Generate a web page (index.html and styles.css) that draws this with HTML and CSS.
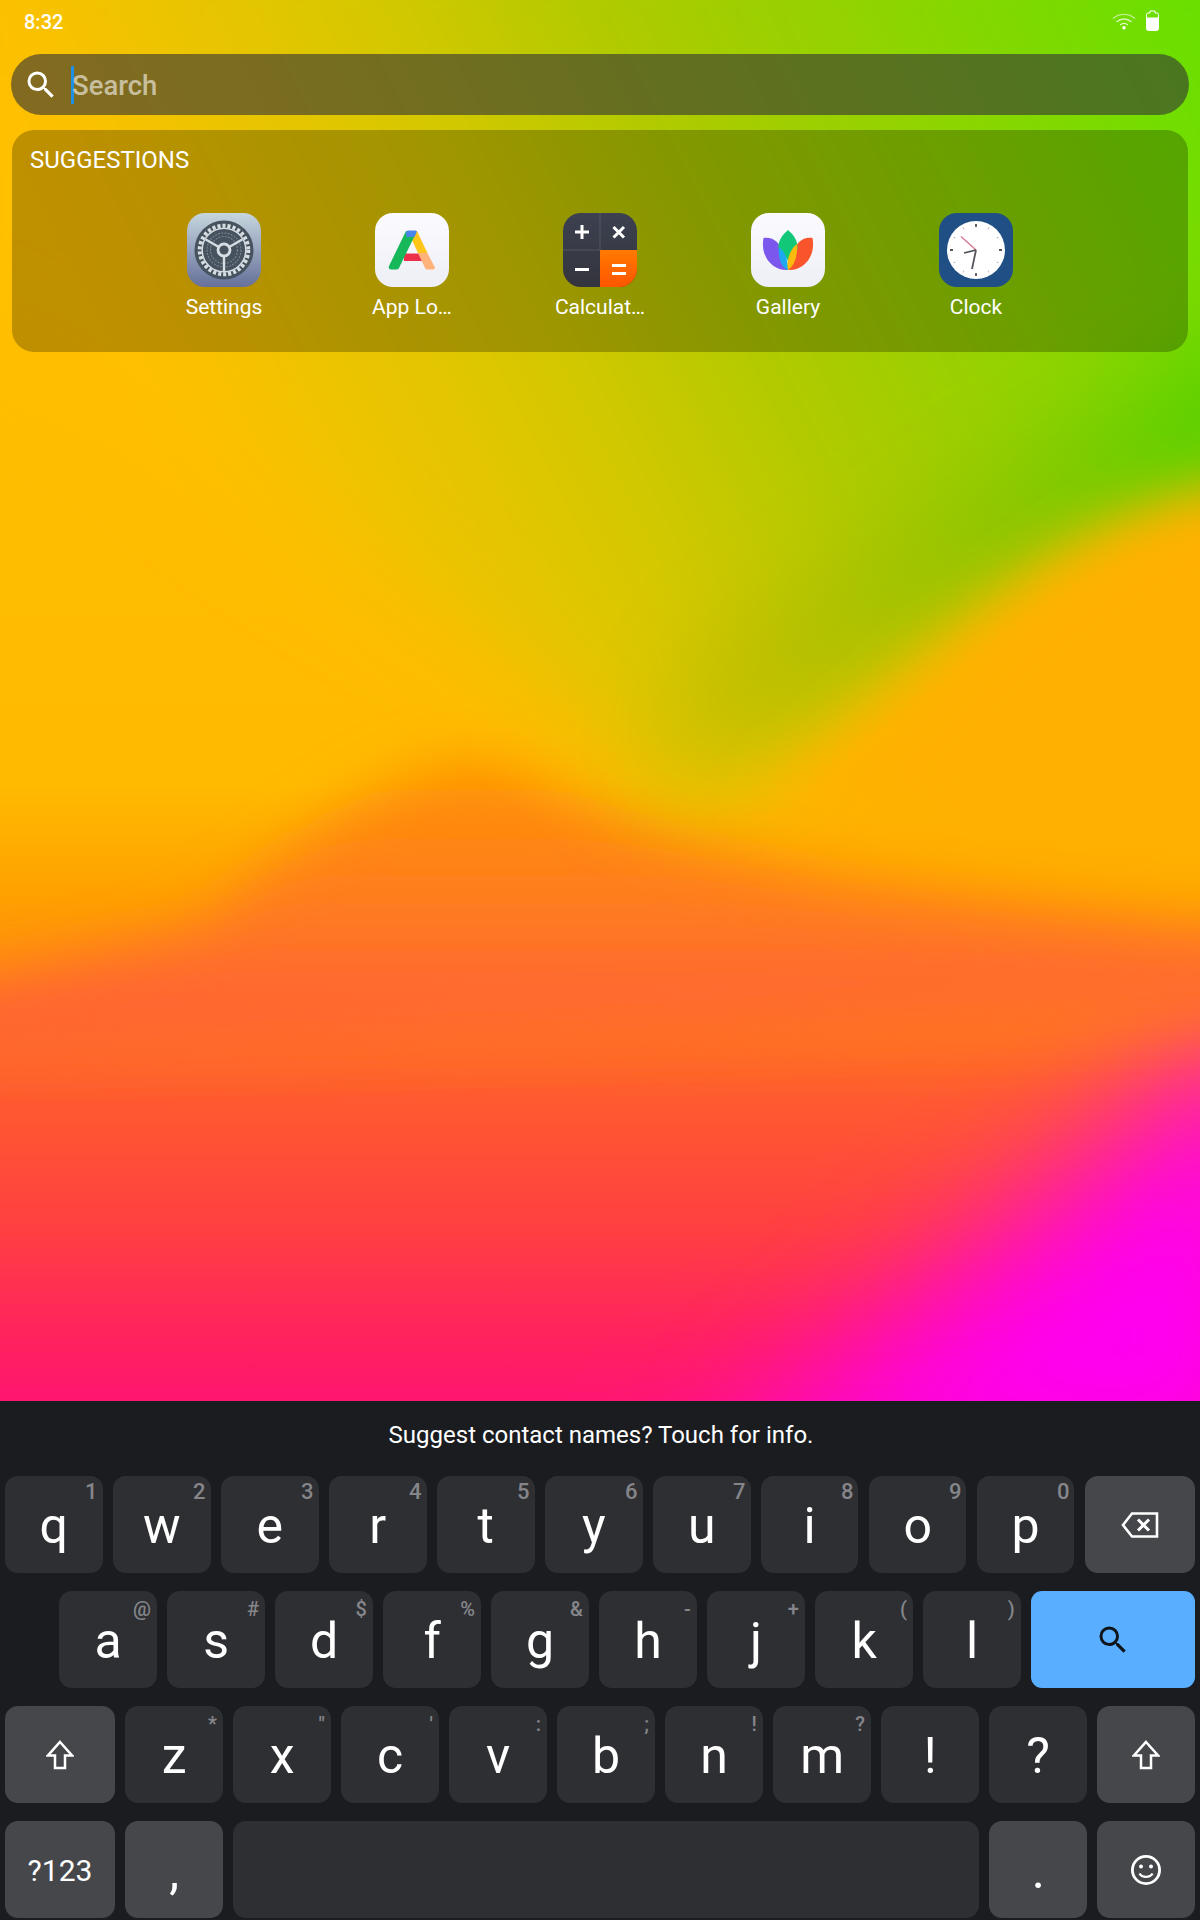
FILE: index.html
```html
<!DOCTYPE html>
<html lang="en">
<head>
<meta charset="utf-8">
<title>Launcher search</title>
<link rel="stylesheet" href="styles.css">
</head>
<body>
<div class="screen">
  <svg class="wallpaper" viewBox="0 0 1200 1401" preserveAspectRatio="none" aria-hidden="true">
    <defs>
      <linearGradient id="wpBase" x1="0" y1="0" x2="0" y2="1">
        <stop offset="0" stop-color="#ffc000"/>
        <stop offset="0.56" stop-color="#ffbb00"/>
        <stop offset="0.64" stop-color="#ffa000"/>
        <stop offset="0.70" stop-color="#ff8a10"/>
        <stop offset="0.785" stop-color="#ff5a30"/>
        <stop offset="0.875" stop-color="#ff4040"/>
        <stop offset="0.96" stop-color="#ff2060"/>
        <stop offset="1" stop-color="#ff1670"/>
      </linearGradient>
      <linearGradient id="wpGreen" gradientUnits="userSpaceOnUse" x1="150" y1="350" x2="1250" y2="-200">
        <stop offset="0" stop-color="#ffc000"/>
        <stop offset="0.285" stop-color="#d6c800"/>
        <stop offset="0.46" stop-color="#aeca00"/>
        <stop offset="0.89" stop-color="#68e000"/>
        <stop offset="1" stop-color="#5ce000"/>
      </linearGradient>
      <linearGradient id="wpBand" gradientUnits="userSpaceOnUse" x1="660" y1="0" x2="1200" y2="0">
        <stop offset="0" stop-color="#d0bc00"/>
        <stop offset="0.35" stop-color="#a8c000"/>
        <stop offset="0.65" stop-color="#80c400"/>
        <stop offset="1" stop-color="#54d000"/>
      </linearGradient>
      <linearGradient id="wpOrange" x1="0" y1="0" x2="0" y2="1">
        <stop offset="0" stop-color="#ff9200"/>
        <stop offset="0.5" stop-color="#ff7c20"/>
        <stop offset="1" stop-color="#ff5a3c"/>
      </linearGradient>
      <filter id="blurWide" x="-30%" y="-30%" width="160%" height="160%"><feGaussianBlur stdDeviation="70"/></filter>
      <filter id="blurMid" x="-30%" y="-30%" width="160%" height="160%"><feGaussianBlur stdDeviation="45"/></filter>
      <filter id="blurNarrow" x="-30%" y="-30%" width="160%" height="160%"><feGaussianBlur stdDeviation="28"/></filter>
    </defs>
    <rect width="1200" height="1401" fill="url(#wpBase)"/>
    <path d="M680 1500 L1300 1000 V1500 Z" fill="#ff00f0" filter="url(#blurWide)"/>
    <path d="M-100 1010 L200 930 C330 810 420 750 500 765 C620 810 700 860 850 890 L1300 950 L1300 1010 L-100 1050Z" fill="url(#wpOrange)" filter="url(#blurNarrow)"/>
    <path d="M-100 -100 H1300 V470 C1100 480 1000 560 850 690 C780 760 720 800 660 790 C520 640 300 560 150 420 L-100 300 Z" fill="url(#wpGreen)" filter="url(#blurMid)"/>
    <path d="M1300 300 L1300 490 C1100 500 1000 580 850 690 C770 750 700 780 650 770 L700 640 Z" fill="url(#wpBand)" opacity="0.9" filter="url(#blurMid)"/>
    <path d="M1300 485 C1150 490 1050 560 920 680 C860 730 820 770 760 800 L1000 860 L1300 900 Z" fill="#ffb000" filter="url(#blurNarrow)"/>
  </svg>

  <header class="status">
    <span class="clock-text">8:32</span>
    <span class="status-icons">
      <svg class="wifi" width="24" height="18" viewBox="0 0 24 18" fill="none" stroke="#fff" stroke-width="1.4" stroke-opacity="0.55">
        <path d="M1 6.500C7 1 17 1 23 6.500"/>
        <path d="M4.500 10C9 6 15 6 19.500 10" stroke-opacity="0.7"/>
        <path d="M8 13C10.500 11 13.500 11 16 13" stroke-opacity="0.8"/>
        <circle cx="12" cy="15.800" r="1.800" fill="#fff" stroke="none"/>
      </svg>
      <svg width="13" height="21" viewBox="0 0 13 21">
        <path d="M4 1h5v2h2a1.500 1.500 0 0 1 1.500 1.500v14a2 2 0 0 1-2 2h-8a2 2 0 0 1-2-2v-14A1.500 1.500 0 0 1 2 3h2z" fill="none" stroke="#fff" stroke-width="1"/>
        <path d="M.500 7.500h12v11a2 2 0 0 1-2 2h-8a2 2 0 0 1-2-2z" fill="#fff"/>
      </svg>
    </span>
  </header>

  <div class="search-bar">
    <svg class="search-icon" width="36" height="36" viewBox="0 0 24 24" fill="#fff"><path d="M15.500 14h-.79l-.28-.27A6.470 6.470 0 0 0 16 9.500 6.500 6.500 0 1 0 9.500 16c1.610 0 3.090-.59 4.230-1.570l.27.28v.79l5 4.990L20.490 19l-4.990-5zm-6 0C7.010 14 5 11.990 5 9.500S7.010 5 9.500 5 14 7.010 14 9.500 11.990 14 9.500 14z"/></svg>
    <span class="caret"></span>
    <span class="placeholder">Search</span>
  </div>

  <section class="panel">
    <h2 class="panel-title">SUGGESTIONS</h2>
    <div class="apps">
      <div class="app">
        <svg class="app-icon" viewBox="0 0 74 74">
          <defs><linearGradient id="setBg" x1="0" y1="0" x2="0" y2="1"><stop offset="0" stop-color="#c6d6de"/><stop offset="1" stop-color="#66709a"/></linearGradient></defs>
          <rect width="74" height="74" rx="18" fill="url(#setBg)"/>
          <circle cx="37" cy="37" r="29.500" fill="#46525e"/>
          <circle cx="37" cy="37" r="24.300" fill="none" stroke="#d6dee3" stroke-width="4" stroke-dasharray="3.100 2"/>
          <circle cx="37" cy="37" r="21.800" fill="none" stroke="#d6dee3" stroke-width="1.500"/>
          <circle cx="37" cy="37" r="17" fill="none" stroke="#77838f" stroke-width="1.200" stroke-dasharray="2 1.200"/>
          <circle cx="37" cy="37" r="13.500" fill="none" stroke="#77838f" stroke-width="1.200" stroke-dasharray="2 1.200"/>
          <g stroke="#d6dee3" stroke-width="2.400"><path d="M37 43v15"/><path d="M31.800 34 18.800 26.500"/><path d="M42.200 34 55.200 26.500"/></g>
          <circle cx="37" cy="37" r="6" fill="#46525e" stroke="#d6dee3" stroke-width="2.800"/>
        </svg>
        <span class="app-label">Settings</span>
      </div>
      <div class="app">
        <svg class="app-icon" viewBox="0 0 74 74">
          <defs><linearGradient id="whiteBg" x1="0" y1="0" x2="0" y2="1"><stop offset="0" stop-color="#fbfbff"/><stop offset="1" stop-color="#eeeff6"/></linearGradient></defs>
          <rect width="74" height="74" rx="18" fill="url(#whiteBg)"/>
          <rect x="29" y="40.500" width="18" height="7.500" fill="#ee2f4c"/>
          <path d="M43 40H52.400L59.700 54Q60.500 56.500 58 56.500H52.500Q50.800 56.500 50 55Z" fill="#ffb27a"/>
          <path d="M37 27 43 40H52.400L42 18H33Z" fill="#ffc61a"/>
          <path d="M31 18 14 53Q13 56.500 16 56.500H21.500Q23.200 56.500 24 55L41 20Z" fill="#17b85a"/>
          <path d="M33 17.500H40.500Q42.500 17.500 41.500 19.500L39.500 24H31.500L30.800 20Q31.500 17.500 33 17.500Z" fill="#4a86ea"/>
        </svg>
        <span class="app-label">App Lo…</span>
      </div>
      <div class="app">
        <svg class="app-icon" viewBox="0 0 74 74">
          <defs>
            <linearGradient id="calcBg" x1="0" y1="0" x2="0" y2="1"><stop offset="0" stop-color="#3d4150"/><stop offset="1" stop-color="#33343d"/></linearGradient>
            <linearGradient id="calcOr" x1="0" y1="0" x2="0" y2="1"><stop offset="0" stop-color="#ff7a00"/><stop offset="1" stop-color="#ff5500"/></linearGradient>
            <clipPath id="calcClip"><rect width="74" height="74" rx="18"/></clipPath>
          </defs>
          <g clip-path="url(#calcClip)">
            <rect width="74" height="74" fill="url(#calcBg)"/>
            <rect x="37" y="37" width="37" height="37" fill="url(#calcOr)"/>
            <path d="M37 0V37M0 37H37" stroke="#5a5d68" stroke-width="0.800"/>
          </g>
          <g stroke="#fff" stroke-width="3" fill="none">
            <path d="M19 12V26M12 19H26"/>
            <path d="M50.500 14 61 24.500M61 14 50.500 24.500"/>
            <path d="M12 56.500H26"/>
            <path d="M49 52.500H63M49 60.500H63"/>
          </g>
        </svg>
        <span class="app-label">Calculat…</span>
      </div>
      <div class="app">
        <svg class="app-icon" viewBox="0 0 74 74">
          <rect width="74" height="74" rx="18" fill="url(#whiteBg)"/>
          <path d="M12.500 25C24 23 33 32 37 57 22 58 9 44 12.500 25Z" fill="#7b57ee"/>
          <path d="M61.500 25C50 23 41 32 37 57 52 58 65 44 61.500 25Z" fill="#f9542c"/>
          <path d="M37 17C44 23 48 30 46 38 42 41 39 44 37 48 35 44 32 41 28 38 26 30 30 23 37 17Z" fill="#12c878"/>
          <path d="M28 34C34 39 37 46 37 57 30 55 27 44 28 34Z" fill="#1ea8f0"/>
          <path d="M46 31C47 40 44 53 37 57 35 48 39 36 46 31Z" fill="#fdbb10"/>
        </svg>
        <span class="app-label">Gallery</span>
      </div>
      <div class="app">
        <svg class="app-icon" viewBox="0 0 74 74">
          <rect width="74" height="74" rx="18" fill="#1f4f84"/>
          <circle cx="37" cy="37" r="29" fill="#fff"/>
          <g stroke="#222" stroke-width="1.400"><path d="M37 11v3M37 60v3M11 37h3M60 37h3"/></g>
          <g stroke="#c0c4ca" stroke-width="1.100"><path d="M50 14.500l-1 2M24 14.500l1 2M59.500 24l-2 1M14.500 24l2 1M59.500 50l-2-1M14.500 50l2-1M50 59.500l-1-2M24 59.500l1-2"/></g>
          <path d="M37 37 22 23.500" stroke="#d9748c" stroke-width="1.300"/>
          <path d="M37 37 25 40" stroke="#4a4a55" stroke-width="1.800"/>
          <path d="M37 37 33 56" stroke="#55555f" stroke-width="1.800"/>
        </svg>
        <span class="app-label">Clock</span>
      </div>
    </div>
  </section>

  <div class="spacer"></div>

  <section class="keyboard">
    <div class="suggest">Suggest contact names? Touch for info.</div>
    <div class="row">
      <div class="key">q<span class="hint digit">1</span></div>
      <div class="key">w<span class="hint digit">2</span></div>
      <div class="key">e<span class="hint digit">3</span></div>
      <div class="key">r<span class="hint digit">4</span></div>
      <div class="key">t<span class="hint digit">5</span></div>
      <div class="key">y<span class="hint digit">6</span></div>
      <div class="key">u<span class="hint digit">7</span></div>
      <div class="key">i<span class="hint digit">8</span></div>
      <div class="key">o<span class="hint digit">9</span></div>
      <div class="key">p<span class="hint digit">0</span></div>
      <div class="key fn grow">
        <svg width="38" height="28" viewBox="0 0 38 28" fill="none" stroke="#fff" stroke-width="2.600"><path d="M2 14 11 2.500H36V25.500H11Z"/><path d="M17 8.500 28 19.500M28 8.500 17 19.500" stroke-width="3"/></svg>
      </div>
    </div>
    <div class="row row-home">
      <div class="key">a<span class="hint">@</span></div>
      <div class="key">s<span class="hint">#</span></div>
      <div class="key">d<span class="hint">$</span></div>
      <div class="key">f<span class="hint">%</span></div>
      <div class="key">g<span class="hint">&amp;</span></div>
      <div class="key">h<span class="hint">-</span></div>
      <div class="key">j<span class="hint">+</span></div>
      <div class="key">k<span class="hint">(</span></div>
      <div class="key">l<span class="hint">)</span></div>
      <div class="key action grow">
        <svg width="36" height="36" viewBox="0 0 24 24" fill="#0e1418"><path d="M15.500 14h-.79l-.28-.27A6.470 6.470 0 0 0 16 9.500 6.500 6.500 0 1 0 9.500 16c1.610 0 3.090-.59 4.230-1.570l.27.28v.79l5 4.990L20.490 19l-4.990-5zm-6 0C7.010 14 5 11.990 5 9.500S7.010 5 9.500 5 14 7.010 14 9.500 11.990 14 9.500 14z"/></svg>
      </div>
    </div>
    <div class="row">
      <div class="key fn side">
        <svg width="28" height="30" viewBox="0 0 28 30" fill="none" stroke="#fff" stroke-width="2.500"><path d="M14 2 26 15.500H19V28H9V15.500H2Z"/></svg>
      </div>
      <div class="key">z<span class="hint">*</span></div>
      <div class="key">x<span class="hint">"</span></div>
      <div class="key">c<span class="hint">'</span></div>
      <div class="key">v<span class="hint">:</span></div>
      <div class="key">b<span class="hint">;</span></div>
      <div class="key">n<span class="hint">!</span></div>
      <div class="key">m<span class="hint">?</span></div>
      <div class="key">!</div>
      <div class="key">?</div>
      <div class="key fn grow">
        <svg width="28" height="30" viewBox="0 0 28 30" fill="none" stroke="#fff" stroke-width="2.500"><path d="M14 2 26 15.500H19V28H9V15.500H2Z"/></svg>
      </div>
    </div>
    <div class="row">
      <div class="key fn side label">?123</div>
      <div class="key fn">,</div>
      <div class="key grow"></div>
      <div class="key fn">.</div>
      <div class="key fn emoji">
        <svg width="32" height="32" viewBox="0 0 32 32" fill="none" stroke="#fff" stroke-width="2.800"><circle cx="16" cy="16" r="13.600"/><path d="M9.500 19.500C12 24 20 24 22.500 19.500" stroke-width="2.400"/><circle cx="11" cy="12.500" r="2" fill="#fff" stroke="none"/><circle cx="21" cy="12.500" r="2" fill="#fff" stroke="none"/></svg>
      </div>
    </div>
  </section>
</div>
</body>
</html>
```

FILE: styles.css
```css
* { box-sizing: border-box; }
html, body { margin: 0; padding: 0; }
body { font-family: Roboto, "Noto Sans", sans-serif; color: #fff; }

.screen {
  position: relative;
  width: 1200px;
  height: 1920px;
  overflow: hidden;
  display: flex;
  flex-direction: column;
  background: #ffc000;
}
.wallpaper {
  position: absolute;
  left: 0;
  top: 0;
  width: 1200px;
  height: 1401px;
}
.status, .search-bar, .panel, .spacer, .keyboard { position: relative; }

.status {
  height: 54px;
  padding: 0 24px;
  display: flex;
  justify-content: space-between;
  align-items: flex-start;
  flex: none;
}
.clock-text { font-size: 20px; font-weight: 500; line-height: 44px; }
.status-icons { display: flex; gap: 10px; padding: 10px 17px 0 0; }
.wifi { margin-top: 2px; }

.search-bar {
  flex: none;
  height: 61px;
  margin: 0 11px;
  padding-left: 12px;
  display: flex;
  align-items: center;
  border-radius: 31px;
  background: rgba(52, 52, 52, 0.61);
}
.caret { width: 3px; height: 38px; margin-left: 12px; background: #1f8fe2; }
.placeholder { font-size: 27.5px; font-weight: 500; color: rgba(255, 255, 255, 0.58); margin: 2px 0 0 -2px; }

.panel {
  flex: none;
  height: 222px;
  margin: 15px 12px 0;
  padding: 14px 18px 0;
  border-radius: 22px;
  background: rgba(0, 0, 0, 0.25);
}
.panel-title { margin: 0; font-size: 24px; font-weight: 400; line-height: 32px; color: #fff; }
.apps { display: flex; justify-content: center; margin-top: 37px; }
.app { width: 188px; display: flex; flex-direction: column; align-items: center; }
.app-icon { width: 74px; height: 74px; display: block; }
.app-label { margin-top: 4px; font-size: 21px; line-height: 32px; }

.spacer { flex: 1; }

.keyboard {
  flex: none;
  height: 519px;
  background: #1a1c20;
  padding: 0 5px;
}
.suggest { height: 75px; padding: 18px 0 0 2px; text-align: center; font-size: 24px; line-height: 32px; }
.row { display: flex; gap: 10.4px; height: 97px; margin-bottom: 18px; }
.row-home { padding-left: 54.4px; }
.key {
  position: relative;
  flex: 0 0 97.6px;
  display: flex;
  align-items: center;
  justify-content: center;
  padding-top: 3px;
  border-radius: 13px;
  background: #2e2f33;
  font-size: 50px;
  line-height: 1;
}
.key svg { margin-top: -3px; }
.fn { background: #46474b; }
.side { flex: 0 0 110px; }
.grow { flex: 1 1 0; }
.action { background: #5aaeff; border-radius: 11px; }
.label { font-size: 30px; }
.hint {
  position: absolute;
  top: 6px;
  right: 6px;
  font-size: 20px;
  font-weight: 500;
  line-height: 24px;
  color: #85868a;
}
.digit { font-size: 22px; top: 4px; right: 5px; }
```
